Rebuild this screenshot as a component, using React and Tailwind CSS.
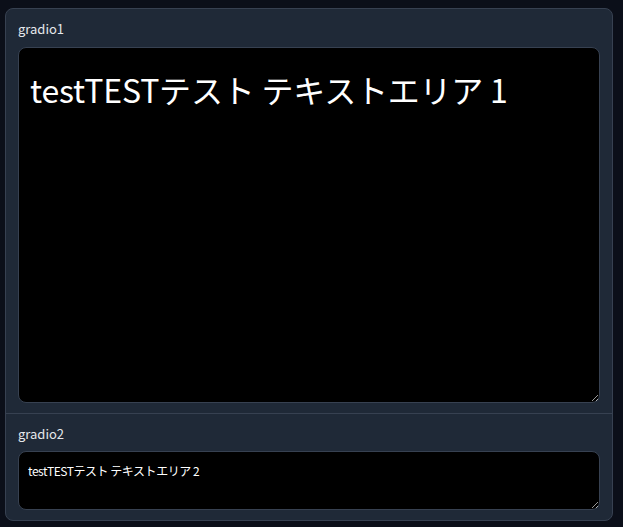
import React from "react";

export default function App() {
  const font = "[font-family:'Noto_Sans_CJK_JP','Noto_Sans',sans-serif]";
  return (
    <div className={`min-h-[527px] w-[623px] bg-[#0b0f19] pt-[8px] pl-[5px] ${font}`}>
      <div className="w-[608px] overflow-hidden rounded-lg border border-[#374151] bg-[#1f2937]">
        <div className="flex flex-col px-[12px] pt-[10px] pb-[10px]">
          <label className="mb-[8px] h-[20px] text-[13px] leading-[20px] text-[#e5e7eb]">gradio1</label>
          <textarea
            readOnly
            defaultValue="testTESTテスト テキストエリア 1"
            className={`h-[356px] w-full resize-y rounded-lg border border-[#374151] bg-black pl-[11px] pt-[17px] text-[32px] leading-[1.5] tracking-[-0.2px] text-white outline-none ${font}`}
          />
        </div>
        <div className="border-t border-[#374151] flex flex-col px-[12px] pt-[10px] pb-[10px]">
          <label className="mb-[7px] h-[20px] text-[13px] leading-[20px] text-[#e5e7eb]">gradio2</label>
          <textarea
            readOnly
            defaultValue="testTESTテスト テキストエリア 2"
            className={`h-[59px] w-full resize-y rounded-lg border border-[#374151] bg-black pl-[9px] pt-[10px] text-[12px] leading-[1.5] tracking-[-0.45px] text-white outline-none ${font}`}
          />
        </div>
      </div>
    </div>
  );
}
